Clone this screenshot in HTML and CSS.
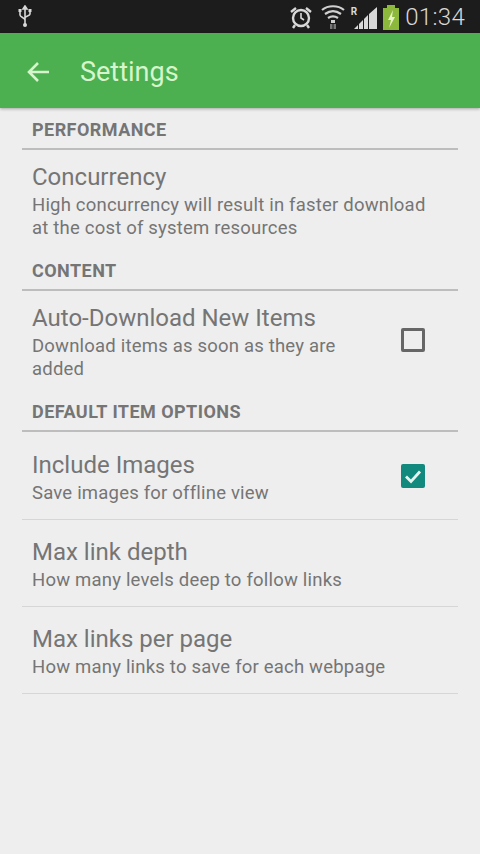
FILE: index.html
```html
<!DOCTYPE html>
<html lang="en">
<head>
<meta charset="utf-8">
<title>Settings</title>
<link rel="stylesheet" href="styles.css">
</head>
<body>
<div class="status">
  <svg class="usb" viewBox="0 0 16 24" width="16" height="24"><path d="M8 1v19M8 1l-2 3h4zM3 6v4c0 2 5 3 5 5M13 6v3c0 2-5 2-5 4" fill="none" stroke="#d8d8d8" stroke-width="1.6"/><circle cx="8" cy="20" r="2" fill="#d8d8d8"/><rect x="1.5" y="4" width="3" height="3" fill="#d8d8d8"/><rect x="11.5" y="4" width="3" height="3" fill="#d8d8d8"/></svg>
  <div class="status-right">
    <svg class="alarm" viewBox="0 0 24 24" width="24" height="24"><circle cx="12" cy="13" r="8" fill="none" stroke="#d8d8d8" stroke-width="2.4"/><path d="M12 8v5l3 2" fill="none" stroke="#d8d8d8" stroke-width="1.6"/><path d="M2 7l5-4M22 7l-5-4M6 20l-2 3M18 20l2 3" stroke="#d8d8d8" stroke-width="2.4"/></svg>
    <svg class="wifi" viewBox="0 0 24 26" width="24" height="26"><path d="M1 6c6-5 16-5 22 0M4 10c5-3.500 11-3.500 16 0M7 14c3-2 7-2 10 0" fill="none" stroke="#d0d0d0" stroke-width="2.200"/><path d="M10 16h4v3h-4z" fill="#d0d0d0"/><path d="M9 20h2.500v5H9zM12.500 20H15v5h-2.500z" fill="#777"/></svg>
    <span class="roam">R</span>
    <svg class="signal" viewBox="0 0 24 24" width="24" height="24"><path d="M0 23h4v-4zM5 23h4v-9l-4 4zM10 23h4V9l-4 4zM15 23h8V1l-8 7z" fill="#d8d8d8"/></svg>
    <svg class="battery" viewBox="0 0 18 26" width="18" height="26"><rect x="5" y="0" width="8" height="3" fill="#8cb83c"/><rect x="1" y="3" width="16" height="22" fill="#8cb83c"/><path d="M11 5l-5 10h3l-2 8 6-11h-3z" fill="#e6f2c8"/></svg>
    <span class="clock">01:34</span>
  </div>
</div>
<header class="appbar">
  <svg class="back" viewBox="0 0 24 24" width="24" height="24"><path d="M23 12H3M12 3l-9 9 9 9" fill="none" stroke="#d6f5cc" stroke-width="2.600"/></svg>
  <h1 class="title">Settings</h1>
</header>
<main class="list">
  <h2 class="section">PERFORMANCE</h2>
  <div class="item item-two">
    <div class="text">
      <div class="name">Concurrency</div>
      <div class="desc">High concurrency will result in faster download<br>at the cost of system resources</div>
    </div>
  </div>
  <h2 class="section">CONTENT</h2>
  <div class="item item-two">
    <div class="text">
      <div class="name">Auto-Download New Items</div>
      <div class="desc">Download items as soon as they are<br>added</div>
    </div>
    <span class="box"></span>
  </div>
  <h2 class="section">DEFAULT ITEM OPTIONS</h2>
  <div class="item item-tall ruled">
    <div class="text">
      <div class="name">Include Images</div>
      <div class="desc">Save images for offline view</div>
    </div>
    <span class="box checked"><svg viewBox="0 0 24 24" width="24" height="24"><path d="M5 12.500l5 5 9-10" fill="none" stroke="#e4f5f1" stroke-width="2.800"/></svg></span>
  </div>
  <div class="item ruled">
    <div class="text">
      <div class="name">Max link depth</div>
      <div class="desc">How many levels deep to follow links</div>
    </div>
  </div>
  <div class="item ruled">
    <div class="text">
      <div class="name">Max links per page</div>
      <div class="desc">How many links to save for each webpage</div>
    </div>
  </div>
</main>
</body>
</html>
```
FILE: styles.css
```css
* { box-sizing: border-box; }
html, body { margin: 0; height: 100%; }
body {
  width: 480px;
  height: 854px;
  overflow: hidden;
  background: #eeeeee;
  font-family: Roboto, "Liberation Sans", sans-serif;
  color: #757575;
}
.status {
  height: 33px;
  background: #1c1c1c;
  display: flex;
  align-items: center;
  justify-content: space-between;
  padding: 0 15px 0 17px;
}
.status-right { display: flex; align-items: center; }
.alarm { margin-right: 8px; }
.wifi { margin-right: 6px; }
.roam { font-size: 10px; font-weight: 700; color: #d8d8d8; align-self: flex-start; margin-top: 4px; margin-right: -3px; }
.signal { margin-right: 4px; margin-top: 3px; }
.battery { margin-right: 5px; margin-top: 3px; }
.clock { font-size: 24px; letter-spacing: 0.300px; color: #d8d8d8; font-weight: 300; }
.appbar {
  height: 75px;
  background: #4caf50;
  display: flex;
  align-items: center;
  padding-left: 26px;
  box-shadow: 0 1px 3px rgba(0,0,0,0.3);
}
.back { margin-top: 2px; }
.title {
  margin: 2px 0 0 30px;
  font-size: 27px;
  font-weight: 400;
  color: #d6f5cc;
}
.list { padding: 9px 22px 0; }
.section {
  margin: 0;
  height: 33px;
  padding: 3px 10px 0;
  font-size: 18px;
  line-height: 20px;
  font-weight: 700;
  letter-spacing: 0.450px;
  color: #757575;
  border-bottom: 2px solid #bdbdbd;
}
.item {
  display: flex;
  align-items: flex-start;
  justify-content: space-between;
  padding: 17px 33px 0 10px;
  height: 87px;
}
.item-tall { height: 88px; padding-top: 18px; }
.item-two { height: 108px; padding-top: 12px; }
.ruled { border-bottom: 1px solid #d6d6d6; }
.text { display: flex; flex-direction: column; }
.name { font-size: 24px; line-height: 30px; }
.desc { font-size: 18.500px; line-height: 23px; letter-spacing: 0.200px; margin-top: 2px; white-space: nowrap; }
.item-two .desc { margin-top: 1.500px; }
.box {
  width: 24px;
  height: 24px;
  border: 3px solid #666;
  border-radius: 2px;
  flex: none;
  margin-top: 25px;
}
.checked {
  background: #11897c;
  border: 0;
  display: block;
  margin-top: 14px;
}
.checked svg { display: block; }
```
